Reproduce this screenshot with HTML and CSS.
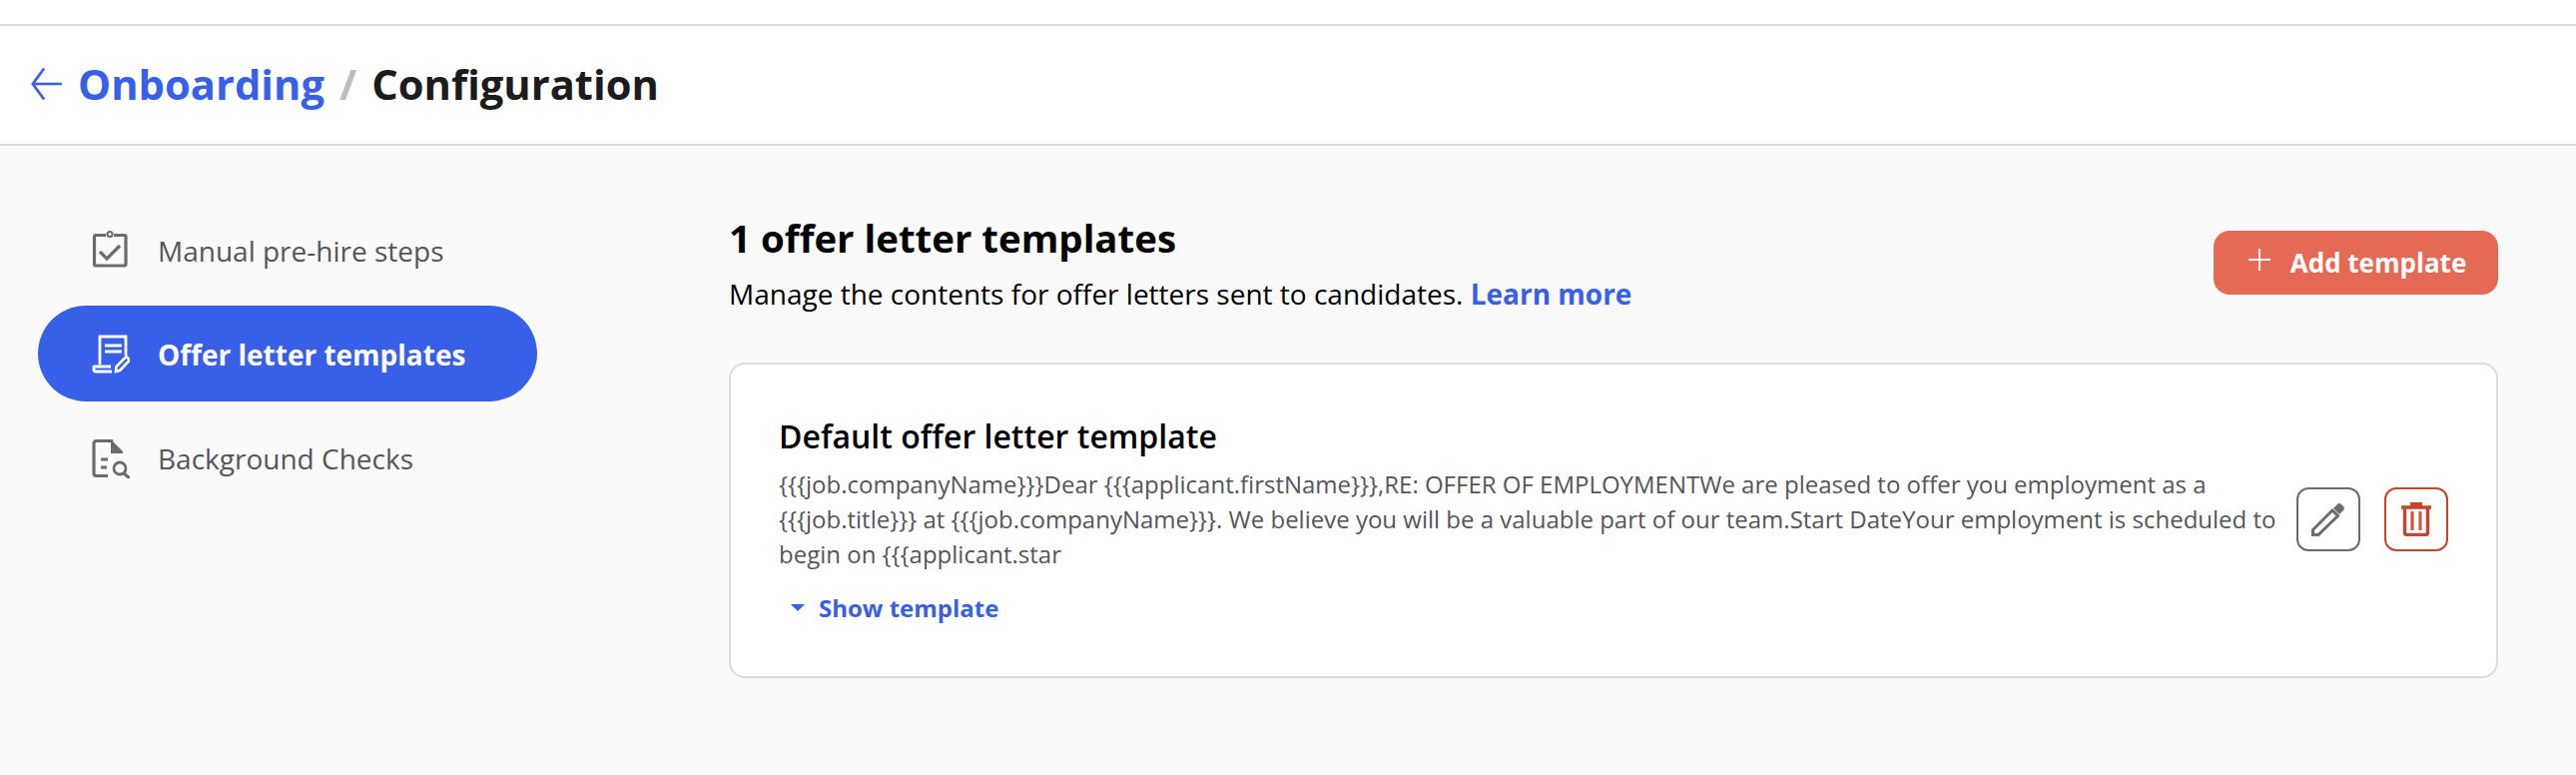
FILE: index.html
```html
<!DOCTYPE html>
<html lang="en">
<head>
  <meta charset="UTF-8" />
  <title>Onboarding / Configuration</title>
  <link rel="stylesheet" href="styles.css">
</head>
<body>
  <div class="top-strip"></div>
  <header class="page-header">
    <svg class="back-icon" viewBox="0 0 24 24" width="34" height="34"><path d="M22.500 12H2M10 1 2 12l8 11" fill="none" stroke="#375fe8" stroke-width="1.900"/></svg>
    <a class="crumb-link">Onboarding</a>
    <span class="crumb-sep">/</span>
    <span class="crumb-current">Configuration</span>
  </header>

  <div class="layout">
    <nav class="sidebar">
      <a class="nav-item">
        <svg class="nav-icon" viewBox="0 0 38 40" width="38" height="40"><path d="M14 4.500H4A1.500 1.500 0 0 0 2.500 6V33.500A1.500 1.500 0 0 0 4 35H32.500A1.500 1.500 0 0 0 34 33.500V6A1.500 1.500 0 0 0 32.500 4.500H22" fill="none" stroke="#6c6c70" stroke-width="3.200"/><circle cx="18" cy="3.500" r="2.500" fill="none" stroke="#6c6c70" stroke-width="2"/><path d="m8 21 7 7 13-13" fill="none" stroke="#6c6c70" stroke-width="3.200"/></svg>
        <span>Manual pre-hire steps</span>
      </a>
      <a class="nav-item active">
        <svg class="nav-icon" viewBox="0 0 38 40" width="38" height="40"><path d="M8 30V2h26v19M13 11h17M13 17h17M2 31v4a2 2 0 0 0 2 2h16M2 32h17" fill="none" stroke="#fff" stroke-width="2.800"/><path d="m24 37 .5-5 9-9q1-1 2 0l1.500 1.500q1 1 0 2l-9 9.500Z" fill="none" stroke="#fff" stroke-width="2.600"/></svg>
        <span>Offer letter templates</span>
      </a>
      <a class="nav-item">
        <svg class="nav-icon" viewBox="0 0 38 40" width="38" height="40"><path d="M16 37.500H4.500a2.500 2.500 0 0 1-2.500-2.500V5a2.500 2.500 0 0 1 2.500-2.500H21" fill="none" stroke="#6c6c70" stroke-width="3.200"/><path d="M19 2h1l11 11v2H19Z" fill="#6c6c70"/><path d="M9 21h7M9 29h6" stroke="#6c6c70" stroke-width="2.800"/><circle cx="28" cy="30" r="6" fill="none" stroke="#6c6c70" stroke-width="2.800"/><path d="m32 35 6 5" stroke="#6c6c70" stroke-width="3.200"/></svg>
        <span>Background Checks</span>
      </a>
    </nav>

    <main class="content">
      <div class="content-head">
        <div>
          <h2>1 offer letter templates</h2>
          <p class="intro">Manage the contents for offer letters sent to candidates. <a class="learn-more">Learn more</a></p>
        </div>
        <button class="add-btn">
          <svg class="add-icon" viewBox="0 0 22 22" width="22" height="22"><path d="M11 0v22M0 11h22" stroke="#fff" stroke-width="1.800"/></svg>
          Add template
        </button>
      </div>

      <section class="card">
        <div class="card-text">
          <h3>Default offer letter template</h3>
          <p class="preview">{{{job.companyName}}}Dear {{{applicant.firstName}}},RE: OFFER OF EMPLOYMENTWe are pleased to offer you employment as a {{{job.title}}} at {{{job.companyName}}}. We believe you will be a valuable part of our team.Start DateYour employment is scheduled to begin on {{{applicant.star</p>
          <a class="show-link"><span class="caret"></span>Show template</a>
        </div>
        <div class="card-actions">
          <button class="icon-btn">
            <svg viewBox="0 0 34 34" width="34" height="34"><path d="M1.500 32.500v-5L21 8l5.500 5.500L7 32.500Z" fill="#fff" stroke="#6c6c70" stroke-width="3"/><path d="m22 6 4-4q2-2 4 0l2 2q2 2 0 4l-4 4Z" fill="#6c6c70"/></svg>
          </button>
          <button class="icon-btn danger">
            <svg viewBox="0 0 30 34" width="30" height="34"><path d="M9 1.500h12M0 5h30M3.500 5v25q0 2.500 2.500 2.500h18q2.500 0 2.500-2.500V5" fill="none" stroke="#c8432b" stroke-width="3.400"/><path d="M11 9v19M19 9v19" stroke="#cf5a44" stroke-width="3.200"/></svg>
          </button>
        </div>
      </section>
    </main>
  </div>
</body>
</html>
```

FILE: styles.css
```css
* {
  box-sizing: border-box;
}
body {
  margin: 0;
  min-height: 776px;
  font-family: "Open Sans", sans-serif;
  background-color: #fafafa;
  color: #000;
}
p, h2, h3 {
  margin: 0;
}
.top-strip {
  height: 26px;
  background-color: #fff;
  border-bottom: 2px solid #dcdcdc;
}
.page-header {
  height: 120px;
  display: flex;
  align-items: center;
  padding: 0 0 3px 30px;
  background-color: #fff;
  border-bottom: 2px solid #dcdcdc;
  font-size: 41.7px;
  font-weight: 700;
}
.back-icon {
  margin-right: 14px;
}
.crumb-link {
  color: #375fe8;
}
.crumb-sep {
  color: #bdbdbd;
  margin: 0 15px;
}
.crumb-current {
  color: #1c1c1c;
}
.layout {
  display: flex;
  padding: 56px 78px 0 38px;
}
.sidebar {
  width: 500px;
  flex-shrink: 0;
  margin-right: 192px;
  display: flex;
  flex-direction: column;
  gap: 8px;
}
.nav-item {
  height: 96px;
  padding: 1px 0 0 54px;
  display: flex;
  align-items: center;
  gap: 28px;
  border-radius: 48px;
  font-size: 28px;
  color: #55555a;
}
.nav-item.active {
  background-color: #375fe8;
  color: #fff;
  font-weight: 700;
}
.content {
  flex: 1;
  padding-top: 12px;
}
.content-head {
  display: flex;
  justify-content: space-between;
  align-items: flex-start;
  margin-bottom: 49px;
}
h2 {
  font-size: 38.4px;
  font-weight: 700;
  line-height: 48px;
  margin-bottom: 12px;
}
.intro {
  font-size: 28px;
  line-height: 40px;
}
.learn-more {
  color: #375fe8;
  font-weight: 700;
}
.add-btn {
  width: 285px;
  height: 64px;
  margin-top: 17px;
  padding: 0 0 0 3px;
  display: flex;
  align-items: center;
  justify-content: center;
  gap: 20px;
  background-color: #e56a55;
  color: #fff;
  border: none;
  border-radius: 16px;
  font-family: inherit;
  font-size: 26px;
  font-weight: 700;
}
.add-icon {
  margin-top: -6px;
}
.card {
  height: 316px;
  display: flex;
  align-items: center;
  padding: 0 48px 3px;
  gap: 18px;
  background-color: #fff;
  border: 2px solid #dcdcdc;
  border-radius: 16px;
}
.card-text {
  flex: 1;
}
h3 {
  font-size: 32px;
  font-weight: 600;
  line-height: 44px;
  margin-bottom: 8px;
}
.preview {
  font-size: 24px;
  line-height: 35px;
  color: #55555a;
}
.show-link {
  display: flex;
  align-items: center;
  margin: 20px 0 0 12px;
  color: #375fe8;
  font-size: 24px;
  font-weight: 700;
}
.caret {
  width: 0;
  height: 0;
  margin-right: 14px;
  border-left: 7px solid transparent;
  border-right: 7px solid transparent;
  border-top: 7px solid #375fe8;
}
.card-actions {
  display: flex;
  gap: 24px;
}
.icon-btn {
  width: 64px;
  height: 64px;
  padding: 0;
  display: flex;
  align-items: center;
  justify-content: center;
  background-color: #fff;
  border: 2px solid #6c6c70;
  border-radius: 12px;
}
.icon-btn.danger {
  border-color: #c8432b;
}
```
